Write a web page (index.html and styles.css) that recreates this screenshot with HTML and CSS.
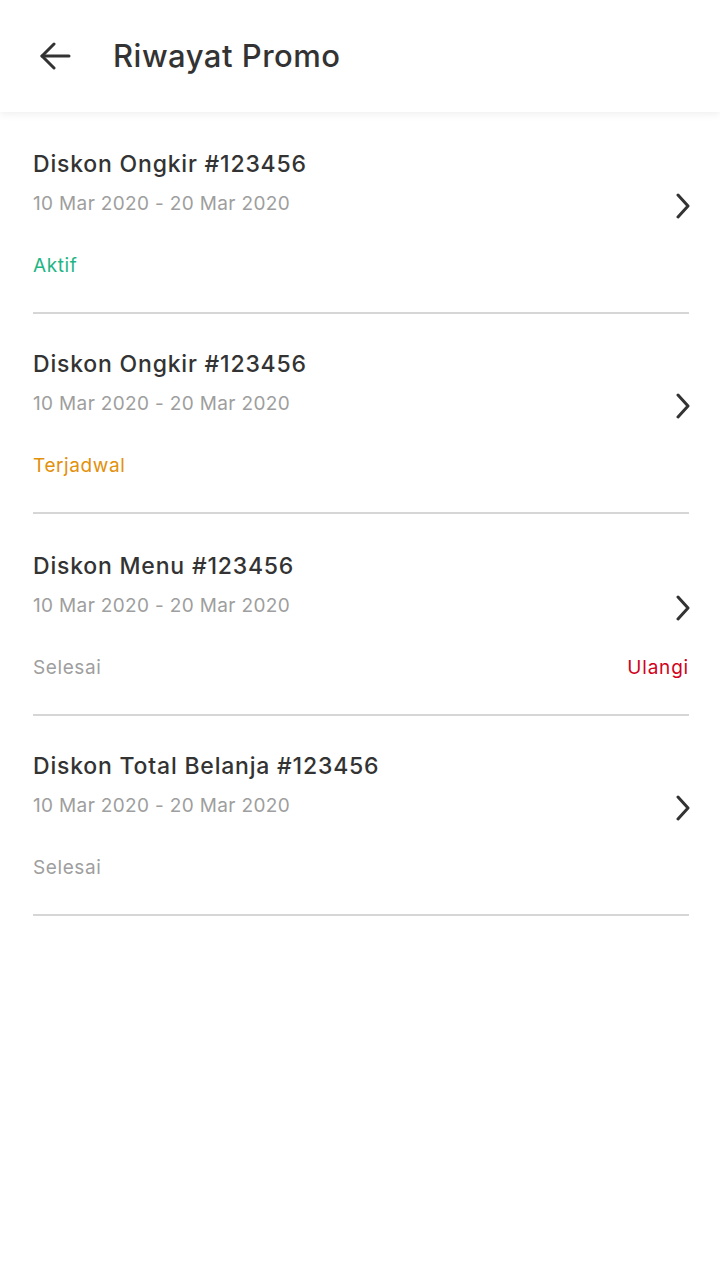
FILE: index.html
```html
<!DOCTYPE html>
<html lang="id">
<head>
<meta charset="utf-8">
<title>Riwayat Promo</title>
<link rel="stylesheet" href="styles.css">
</head>
<body>
<div class="app">
  <header class="topbar">
    <button class="back" aria-label="Kembali">
      <svg width="32" height="28" viewBox="0 0 32 28" fill="none" stroke="#333" stroke-width="3" stroke-linecap="round" stroke-linejoin="round"><path d="M3 14H30"/><path d="M15 2L3 14L15 26"/></svg>
    </button>
    <h1 class="title">Riwayat Promo</h1>
  </header>
  <main class="list">
    <div class="item">
      <div class="name">Diskon Ongkir #123456</div>
      <div class="date">10 Mar 2020 - 20 Mar 2020</div>
      <svg class="chev" width="14" height="26" viewBox="0 0 14 26" fill="none" stroke="#333" stroke-width="3" stroke-linecap="round" stroke-linejoin="round"><path d="M2 2L12 13L2 24"/></svg>
      <div class="status green">Aktif</div>
    </div>
    <div class="item">
      <div class="name">Diskon Ongkir #123456</div>
      <div class="date">10 Mar 2020 - 20 Mar 2020</div>
      <svg class="chev" width="14" height="26" viewBox="0 0 14 26" fill="none" stroke="#333" stroke-width="3" stroke-linecap="round" stroke-linejoin="round"><path d="M2 2L12 13L2 24"/></svg>
      <div class="status orange">Terjadwal</div>
    </div>
    <div class="item tall">
      <div class="name">Diskon Menu #123456</div>
      <div class="date">10 Mar 2020 - 20 Mar 2020</div>
      <svg class="chev" width="14" height="26" viewBox="0 0 14 26" fill="none" stroke="#333" stroke-width="3" stroke-linecap="round" stroke-linejoin="round"><path d="M2 2L12 13L2 24"/></svg>
      <div class="status gray">Selesai</div>
      <div class="action">Ulangi</div>
    </div>
    <div class="item">
      <div class="name">Diskon Total Belanja #123456</div>
      <div class="date">10 Mar 2020 - 20 Mar 2020</div>
      <svg class="chev" width="14" height="26" viewBox="0 0 14 26" fill="none" stroke="#333" stroke-width="3" stroke-linecap="round" stroke-linejoin="round"><path d="M2 2L12 13L2 24"/></svg>
      <div class="status gray">Selesai</div>
    </div>
  </main>
</div>
</body>
</html>
```
FILE: styles.css
```css
* { box-sizing: border-box; }
html, body {
  margin: 0;
  padding: 0;
  background: #ffffff;
}
body {
  font-family: Inter, "Noto Sans", sans-serif;
  color: #333333;
}
.app {
  width: 720px;
  min-height: 1280px;
  background: #ffffff;
}
.topbar {
  height: 112px;
  display: flex;
  align-items: center;
  padding-left: 39px;
  background: #ffffff;
  box-shadow: 0 2px 8px rgba(0, 0, 0, 0.07);
  position: relative;
  z-index: 1;
}
.back {
  border: 0;
  background: none;
  padding: 0;
  width: 32px;
  height: 28px;
  display: flex;
  margin-right: 42px;
}
.title {
  margin: 0;
  font-size: 31px;
  font-weight: 500;
  color: #333333;
  line-height: 40px;
  letter-spacing: 0.5px;
}
.list {
  display: flex;
  flex-direction: column;
  padding-top: 2px;
}
.item {
  margin: 0 31px 0 33px;
  padding: 35px 0 33px;
  border-bottom: 2px solid #d6d6d6;
  display: grid;
  grid-template-columns: 1fr auto;
  grid-template-rows: auto auto auto;
}
.item.tall { padding-top: 37px; }
.name {
  grid-column: 1;
  grid-row: 1;
  font-size: 23px;
  font-weight: 500;
  line-height: 30px;
  letter-spacing: 0.8px;
  color: #333333;
}
.date {
  grid-column: 1;
  grid-row: 2;
  margin-top: 12px;
  font-size: 19px;
  line-height: 26px;
  letter-spacing: 0.35px;
  color: #9e9e9e;
}
.chev {
  grid-column: 2;
  grid-row: 2;
  justify-self: end;
  align-self: end;
  margin-bottom: -2px;
  margin-right: -1px;
}
.status {
  grid-column: 1;
  grid-row: 3;
  margin-top: 36px;
  font-size: 19px;
  line-height: 26px;
  letter-spacing: 0.6px;
}
.action {
  grid-column: 2;
  grid-row: 3;
  margin-top: 36px;
  font-size: 19px;
  line-height: 26px;
  letter-spacing: 0.8px;
  color: #d0021b;
  justify-self: end;
}
.green { color: #1fb584; }
.orange { color: #e3900b; }
.gray { color: #9e9e9e; }
```
